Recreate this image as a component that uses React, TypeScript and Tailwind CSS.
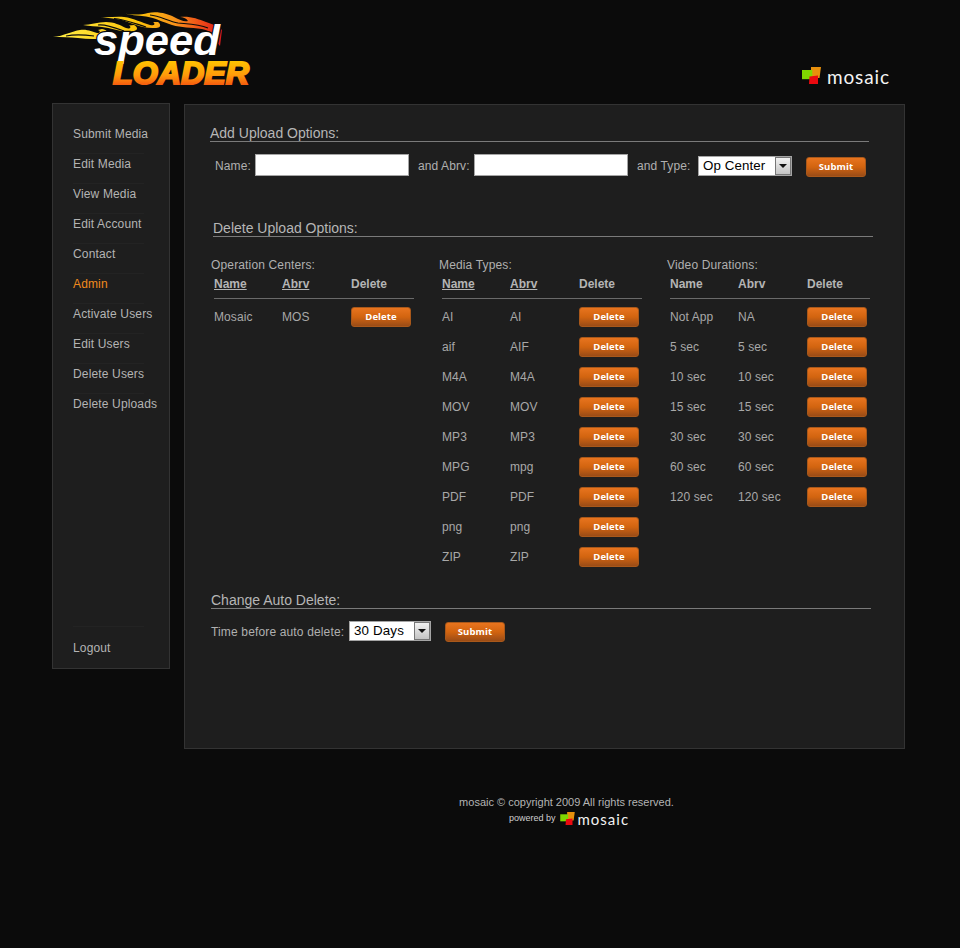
import React from "react";

const FONT = "font-['Liberation_Sans',Arial,sans-serif]";

function MosaicMark({ className }: { className?: string }) {
  return (
    <svg viewBox="0 0 19 17" className={className}>
      <polygon points="9,0 19,0 17.5,11 9,11" fill="#e8900c" />
      <rect x="0" y="3" width="10.3" height="9.2" fill="#80d800" />
      <polygon points="7.5,9.5 16,8.5 16,17 7,17" fill="#ea0a10" />
    </svg>
  );
}

function SpeedLogo() {
  return (
    <svg viewBox="0 0 205 80" className="w-[205px] h-[80px] block">
      <defs>
        <linearGradient id="flame" gradientUnits="userSpaceOnUse" x1="0" y1="0" x2="172" y2="0">
          <stop offset="0" stopColor="#fff04a" />
          <stop offset="0.5" stopColor="#fcc40a" />
          <stop offset="0.72" stopColor="#f7941a" />
          <stop offset="0.88" stopColor="#ee4a18" />
          <stop offset="1" stopColor="#d8161c" />
        </linearGradient>
        <linearGradient id="loader" x1="0" y1="0" x2="0" y2="1">
          <stop offset="0.1" stopColor="#ffc800" />
          <stop offset="0.55" stopColor="#ff9a0a" />
          <stop offset="1" stopColor="#ee3512" />
        </linearGradient>
      </defs>
      <g fill="url(#flame)">
        <path d="M3 27 C14 26 22 21 30 20 C38 19 42 22 47 23 C50 23.5 51 21 48 20 L52 19 C58 20 60 24 56 27 C48 30 38 29 28 28 C20 27 12 27 3 27 Z" />
        <path d="M33 15 C40 15 48 12 56 12 C64 12 70 15 76 18 C80 19.5 82 17 79 15.5 L84 15 C88 17 88 20 84 21 C72 23 62 18 52 17 C46 16.5 40 16 33 15 Z" />
        <path d="M50 7 C58 8 66 6 74 7 C84 8 92 13 100 15 C104 16 106 14 103 12 L108 12 C112 15 110 18 106 18 C92 19 82 13 72 10 C64 8.5 58 8 50 7 Z" />
        <path d="M72 3 C82 5 90 5 98 3 C108 1 118 4 124 7 C130 10 134 12 138 11 C136 8 133 7 130 7 C140 6 148 9 156 12 C164 15 169 16 172 20 L170 36 L165 30 C166 25 160 21 152 19 C140 17 132 18 122 15 C112 12 106 8 96 6.5 C88 5.5 80 5 72 3 Z" />
      </g>
      <g stroke="#0b0b0b" strokeWidth="1.1" fill="none">
        <path d="M16 26 C26 24 36 25 44 26" />
        <path d="M48 15 C56 14 66 18 74 21" />
        <path d="M64 8.5 C74 9 86 14 96 17" />
        <path d="M100 5 C110 6 118 11 128 13 C138 14 148 14 158 18" />
      </g>
      <text
        x="44"
        y="45"
        textLength="126"
        lengthAdjust="spacingAndGlyphs"
        fontFamily="'Liberation Sans',Arial,sans-serif"
        fontStyle="italic"
        fontWeight="700"
        fontSize="43"
        fill="#fff"
        stroke="#0b0b0b"
        strokeWidth="2.5"
        paintOrder="stroke"
      >
        speed
      </text>
      <text
        x="63"
        y="74"
        textLength="136"
        lengthAdjust="spacingAndGlyphs"
        fontFamily="'Liberation Sans',Arial,sans-serif"
        fontStyle="italic"
        fontWeight="700"
        fontSize="31"
        fill="url(#loader)"
        stroke="url(#loader)"
        strokeWidth="2"
      >
        LOADER
      </text>
    </svg>
  );
}

function OrangeButton({ label, className = "" }: { label: string; className?: string }) {
  return (
    <button
      className={`w-[60px] h-[20px] shrink-0 rounded-[3px] bg-gradient-to-b from-[#e8741e] via-[#d2640f] to-[#9a4c16] border border-[#a9581a] text-white text-[9.5px] font-bold font-['Open_Sans',sans-serif] leading-none ${className}`}
    >
      {label}
    </button>
  );
}

function FakeSelect({ value, width }: { value: string; width: string }) {
  return (
    <div className={`relative h-[20px] ${width}`}>
      <select
        defaultValue={value}
        className={`appearance-none w-full h-full bg-white border border-[#a5a5a5] text-black text-[13.33px] ${FONT} pl-[4px] leading-none outline-none rounded-none`}
      >
        <option>{value}</option>
      </select>
      <span className="absolute right-[1px] top-[1px] w-[16px] h-[18px] bg-gradient-to-b from-[#f2f2f2] to-[#c4c4c4] border border-[#777] flex items-center justify-center">
        <svg viewBox="0 0 8 4" className="w-[8px] h-[4px]">
          <polygon points="0,0 8,0 4,4" fill="#111" />
        </svg>
      </span>
    </div>
  );
}

function SectionTitle({ title, className }: { title: string; className: string }) {
  return (
    <div className={`border-b border-[#7a7a7a] h-[18px] text-[14px] leading-[18px] text-[#b6b6b6] ${className}`}>
      {title}
    </div>
  );
}

function OptionTable({
  title,
  rows,
  underlined = true,
}: {
  title: string;
  rows: [string, string][];
  underlined?: boolean;
}) {
  const u = underlined ? "underline" : "";
  return (
    <div className="w-[228px] shrink-0">
      <div className="h-[14px] leading-[14px] text-[12px] tracking-[0.15px] text-[#b0b0b0]">{title}</div>
      <div className="ml-[3px] w-[200px]">
        <div className="flex items-center h-[24px] border-b border-[#6a6a6a] pb-[2px] box-content text-[12px] font-bold text-[#b4b4b4]">
          <span className={`w-[68px] ${u}`}>Name</span>
          <span className={`w-[69px] ${u}`}>Abrv</span>
          <span>Delete</span>
        </div>
        <div className="mt-[3px]">
          {rows.map(([a, b]) => (
            <div key={a} className="flex items-center h-[30px] text-[12px] tracking-[0.1px] text-[#a8a8a8]">
              <span className="w-[68px]">{a}</span>
              <span className="w-[69px]">{b}</span>
              <OrangeButton label="Delete" className="-mt-[1px]" />
            </div>
          ))}
        </div>
      </div>
    </div>
  );
}

const nav = [
  "Submit Media",
  "Edit Media",
  "View Media",
  "Edit Account",
  "Contact",
  "Admin",
  "Activate Users",
  "Edit Users",
  "Delete Users",
  "Delete Uploads",
];

const media: [string, string][] = [
  ["AI", "AI"],
  ["aif", "AIF"],
  ["M4A", "M4A"],
  ["MOV", "MOV"],
  ["MP3", "MP3"],
  ["MPG", "mpg"],
  ["PDF", "PDF"],
  ["png", "png"],
  ["ZIP", "ZIP"],
];

const durations: [string, string][] = [
  ["Not App", "NA"],
  ["5 sec", "5 sec"],
  ["10 sec", "10 sec"],
  ["15 sec", "15 sec"],
  ["30 sec", "30 sec"],
  ["60 sec", "60 sec"],
  ["120 sec", "120 sec"],
];

export default function App() {
  return (
    <div className={`min-h-[948px] w-full bg-[#0b0b0b] ${FONT} overflow-hidden`}>
      <header className="h-[103px] flex justify-between pl-[50px] pr-[70px]">
        <div className="pt-[10px]">
          <SpeedLogo />
        </div>
        <div className="pt-[67px] flex items-start gap-[6px]">
          <MosaicMark className="w-[19px] h-[17px]" />
          <span className="font-['Lato',sans-serif] text-[19px] leading-[20px] tracking-[0.9px] text-[#f4f4f4]">mosaic</span>
        </div>
      </header>

      <div className="flex items-start pl-[52px] gap-[14px]">
        <nav className="w-[118px] h-[566px] bg-[#1e1e1e] border border-[#333] flex flex-col justify-between">
          <ul className="pt-[20px] pl-[20px] pr-[25px]">
            {nav.map((n) => (
              <li
                key={n}
                className={`h-[30px] leading-[20px] text-[12px] tracking-[0.15px] whitespace-nowrap border-b border-[#232323] last:border-b-0 ${
                  n === "Admin" ? "text-[#f08a1d]" : "text-[#b4b4b4]"
                }`}
              >
                {n}
              </li>
            ))}
          </ul>
          <div className="mx-[20px] mr-[25px] mb-[6px] h-[36px] border-t border-[#232323] text-[12px] tracking-[0.15px] leading-[42px] text-[#b4b4b4]">
            Logout
          </div>
        </nav>

        <main className="w-[721px] h-[645px] mt-[1px] bg-[#1e1e1e] border border-[#333] pt-[19px]">
          <SectionTitle title="Add Upload Options:" className="ml-[25px] w-[659px]" />
          <div className="flex items-center h-[22px] mt-[12px] ml-[30px] text-[12px] tracking-[0.1px] text-[#b0b0b0]">
            <span className="w-[40px] pt-[2px]">Name:</span>
            <input className="w-[154px] h-[22px] bg-white border border-[#a5a5a5]" />
            <span className="ml-[9px] w-[56px] whitespace-nowrap pt-[2px]">and Abrv:</span>
            <input className="w-[154px] h-[22px] bg-white border border-[#a5a5a5]" />
            <span className="ml-[9px] w-[61px] whitespace-nowrap pt-[2px]">and Type:</span>
            <FakeSelect value="Op Center" width="w-[94px] mt-[2px]" />
            <OrangeButton label="Submit" className="ml-[14px] mt-[4px]" />
          </div>

          <SectionTitle title="Delete Upload Options:" className="ml-[28px] w-[660px] mt-[43px]" />

          <div className="flex ml-[26px] mt-[21px] h-[329px]">
            <OptionTable title="Operation Centers:" rows={[["Mosaic", "MOS"]]} />
            <OptionTable title="Media Types:" rows={media} />
            <OptionTable title="Video Durations:" rows={durations} underlined={false} />
          </div>

          <SectionTitle title="Change Auto Delete:" className="ml-[26px] w-[660px] mt-[4px]" />
          <div className="flex items-center h-[20px] mt-[12px] ml-[26px] text-[12px] tracking-[0.15px] text-[#b0b0b0]">
            <span className="w-[138px] whitespace-nowrap pt-[1px]">Time before auto delete:</span>
            <FakeSelect value="30 Days" width="w-[82px]" />
            <OrangeButton label="Submit" className="ml-[14px] mt-[2px]" />
          </div>
        </main>
      </div>

      <footer className="mt-[47px] ml-[459px] w-[215px] text-center">
        <div className="text-[11px] leading-[13px] text-[#b4b4b4] whitespace-nowrap">mosaic © copyright 2009 All rights reserved.</div>
        <div className="flex items-center gap-[3px] pl-[50px] mt-[1px] h-[17px]">
          <span className="text-[9px] text-[#cfcfcf] mr-[1px]">powered by</span>
          <MosaicMark className="w-[15px] h-[13px]" />
          <span className="font-['Lato',sans-serif] text-[15px] leading-[16px] tracking-[1px] text-[#f2f2f2]">mosaic</span>
        </div>
      </footer>
    </div>
  );
}
